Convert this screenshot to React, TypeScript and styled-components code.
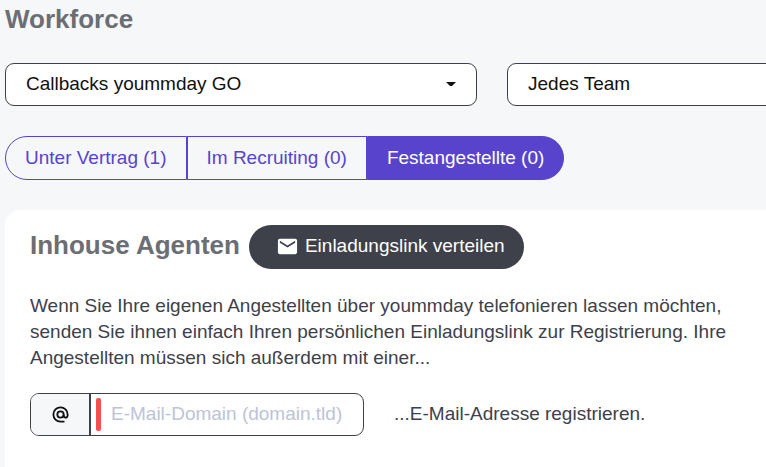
import React, { useState } from "react";
import styled, { createGlobalStyle } from "styled-components";
import { MdEmail } from "react-icons/md";

const GlobalStyle = createGlobalStyle`
  *, *::before, *::after { box-sizing: border-box; }
  body {
    margin: 0;
    background: #f5f7f9;
    color: #3e414a;
    font-family: "Liberation Sans", Arial, sans-serif;
    font-size: 19px;
    line-height: 26px;
  }
  button, input, select { font: inherit; }
`;

const Page = styled.main`
  display: flex;
  flex-direction: column;
  gap: 30px;
  min-height: 100vh;
  padding: 5px 0 0 5px;
  overflow: hidden;
`;

const Heading = styled.h1`
  margin: 0;
  color: #6b6e73;
  font-size: 26px;
  font-weight: bold;
  line-height: 28px;
`;

const Filters = styled.div`
  display: grid;
  grid-template-columns: repeat(2, minmax(472px, 1fr));
  gap: 30px;
`;

const SelectField = styled.div`
  display: grid;
  grid-template-columns: 1fr;
  align-items: center;

  > * { grid-area: 1 / 1; }
`;

const Select = styled.select`
  appearance: none;
  width: 100%;
  height: 43px;
  padding: 0 48px 2px 20px;
  border: 1px solid #3e414a;
  border-radius: 9px;
  background: #fff;
  color: #111;
`;

const Arrow = styled.svg`
  justify-self: end;
  margin-right: 21px;
  pointer-events: none;
`;

const Tabs = styled.div`
  display: flex;
`;

const Tab = styled.button<{ $active: boolean }>`
  height: 44px;
  padding: 0 19px;
  border: 1px solid #5843cd;
  background: ${({ $active }) => ($active ? "#5843cd" : "transparent")};
  color: ${({ $active }) => ($active ? "#fff" : "#5843cd")};
  white-space: nowrap;
  cursor: pointer;

  &:first-child { border-radius: 22px 0 0 22px; }
  &:last-child { border-radius: 0 22px 22px 0; }
`;

const Card = styled.section`
  flex: 1;
  padding: 15px 25px 30px;
  border-radius: 15px 0 0 0;
  background: #fff;
`;

const CardHeader = styled.header`
  display: flex;
  align-items: center;
  gap: 9px;
`;

const CardTitle = styled(Heading).attrs({ as: "h2" })`
  padding-bottom: 4px;
`;

const InviteButton = styled.button`
  display: flex;
  align-items: center;
  gap: 6px;
  height: 44px;
  padding: 0 19px 2px 27px;
  border: 0;
  border-radius: 22px;
  background: #3e414a;
  color: #fff;
  white-space: nowrap;
  cursor: pointer;
`;

const Description = styled.p`
  margin: 24px 0 22px;
`;

const DomainRow = styled.div`
  display: flex;
  align-items: center;
  gap: 30px;
`;

const InputGroup = styled.label`
  display: flex;
  align-items: center;
  width: 334px;
  height: 43px;
  overflow: hidden;
  border: 1px solid #3e414a;
  border-radius: 9px;
  background: #fff;
`;

const Prefix = styled.span`
  display: flex;
  align-items: center;
  justify-content: center;
  width: 60px;
  height: 100%;
  border-right: 2px solid #3e414a;
  background: #f5f7f9;
  color: #111;
`;

const RequiredMark = styled.span`
  width: 5px;
  height: 33px;
  margin-left: 5px;
  border-radius: 2px;
  background: #f74f4f;
`;

const DomainInput = styled.input`
  flex: 1;
  min-width: 0;
  height: 100%;
  padding: 0 10px 2px;
  border: 0;
  outline: 0;
  background: transparent;
  color: #111;

  &::placeholder { color: #bcc4d6; opacity: 1; }
`;

const Suffix = styled.span`
  padding-bottom: 2px;
`;

const tabs = ["Unter Vertrag (1)", "Im Recruiting (0)", "Festangestellte (0)"];

function AtIcon() {
  return (
    <svg
      width="19"
      height="19"
      viewBox="0 0 24 24"
      fill="none"
      stroke="currentColor"
      strokeWidth="2.3"
      aria-hidden="true"
    >
      <circle cx="12" cy="12" r="4" />
      <path d="M17 21h-5a9 9 0 1 1 9-9v1.4a2.5 2.5 0 0 1-5 0V12" />
    </svg>
  );
}

function FilterSelect({ label, option }: { label: string; option: string }) {
  return (
    <SelectField>
      <Select aria-label={label}>
        <option>{option}</option>
      </Select>
      <Arrow width="10" height="5" viewBox="0 0 10 5" aria-hidden="true">
        <path d="M0 0h10L6 4H4z" fill="#111" />
      </Arrow>
    </SelectField>
  );
}

export default function App() {
  const [active, setActive] = useState(2);

  return (
    <>
      <GlobalStyle />
      <Page>
        <Heading>Workforce</Heading>
        <Filters>
          <FilterSelect label="Projekt" option="Callbacks yoummday GO" />
          <FilterSelect label="Team" option="Jedes Team" />
        </Filters>
        <Tabs role="tablist">
          {tabs.map((tab, index) => (
            <Tab
              key={tab}
              type="button"
              role="tab"
              aria-selected={index === active}
              $active={index === active}
              onClick={() => setActive(index)}
            >
              {tab}
            </Tab>
          ))}
        </Tabs>
        <Card>
          <CardHeader>
            <CardTitle>Inhouse Agenten</CardTitle>
            <InviteButton type="button">
              <MdEmail size={23} aria-hidden="true" />
              Einladungslink verteilen
            </InviteButton>
          </CardHeader>
          <Description>
            Wenn Sie Ihre eigenen Angestellten über yoummday telefonieren lassen
            möchten, senden Sie ihnen einfach Ihren persönlichen Einladungslink
            zur Registrierung. Ihre Angestellten müssen sich außerdem mit
            einer...
          </Description>
          <DomainRow>
            <InputGroup>
              <Prefix>
                <AtIcon />
              </Prefix>
              <RequiredMark />
              <DomainInput
                type="text"
                aria-label="E-Mail-Domain"
                placeholder="E-Mail-Domain (domain.tld)"
              />
            </InputGroup>
            <Suffix>...E-Mail-Adresse registrieren.</Suffix>
          </DomainRow>
        </Card>
      </Page>
    </>
  );
}
